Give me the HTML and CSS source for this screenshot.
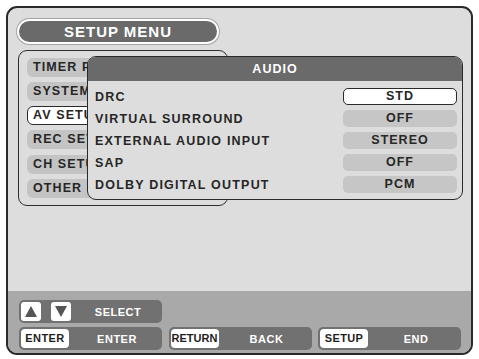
FILE: index.html
```html
<!DOCTYPE html>
<html>
<head>
<meta charset="utf-8">
<link rel="stylesheet" href="styles.css">
</head>
<body>
<div class="frame">
  <div class="main">
    <div class="title">SETUP MENU</div>
    <div class="menu">
      <div class="item">TIMER PROGRAMMING</div>
      <div class="item">SYSTEM SETUP</div>
      <div class="item selected">AV SETUP</div>
      <div class="item">REC SETUP</div>
      <div class="item">CH SETUP</div>
      <div class="item">OTHER</div>
    </div>
  </div>
  <div class="footer">
    <div class="frow">
      <div class="fpill">
        <span class="sq"><svg width="12" height="11" viewBox="0 0 12 11"><polygon points="6,0 12,11 0,11" fill="#555"/></svg></span>
        <span class="sq sq2"><svg width="12" height="11" viewBox="0 0 12 11"><polygon points="0,0 12,0 6,11" fill="#555"/></svg></span>
        <span class="flabel">SELECT</span>
      </div>
    </div>
    <div class="frow">
      <div class="fpill"><span class="key">ENTER</span><span class="flabel">ENTER</span></div>
      <div class="fpill"><span class="key tight">RETURN</span><span class="flabel">BACK</span></div>
      <div class="fpill"><span class="key">SETUP</span><span class="flabel">END</span></div>
    </div>
  </div>
  <div class="audio">
    <div class="ahead">AUDIO</div>
    <div class="abody">
      <div class="arow"><span class="alabel">DRC</span><span class="val active">STD</span></div>
      <div class="arow"><span class="alabel">VIRTUAL SURROUND</span><span class="val">OFF</span></div>
      <div class="arow"><span class="alabel">EXTERNAL AUDIO INPUT</span><span class="val">STEREO</span></div>
      <div class="arow"><span class="alabel">SAP</span><span class="val">OFF</span></div>
      <div class="arow"><span class="alabel">DOLBY DIGITAL OUTPUT</span><span class="val">PCM</span></div>
    </div>
  </div>
</div>
</body>
</html>
```
FILE: styles.css
```css
* { box-sizing: border-box; }
html, body { margin: 0; padding: 0; background: #ffffff; }
body {
  font-family: "Liberation Sans", Arial, sans-serif;
  font-weight: bold;
  color: #262626;
}
.frame {
  position: relative;
  margin: 6px 0 0 6px;
  width: 467px;
  height: 349px;
  border: 2px solid #2a2a2a;
  border-radius: 11px;
  background: #dddddd;
  overflow: hidden;
  display: flex;
  flex-direction: column;
}
.main {
  height: 283px;
  padding: 11px 0 0 9px;
}
.title {
  width: 202px;
  height: 25px;
  border: 2px solid #ffffff;
  border-radius: 13px;
  background: #6a6a6a;
  color: #ffffff;
  font-size: 15px;
  letter-spacing: 1px;
  text-align: center;
  line-height: 21px;
  box-shadow: 0 0 0 1px #a5a5a5;
}
.menu {
  margin: 6px 0 0 1px;
  width: 210px;
  height: 156px;
  border: 1.5px solid #2e2e2e;
  border-radius: 9px;
  padding: 6.5px 0 0 8px;
  display: flex;
  flex-direction: column;
  gap: 5.3px;
}
.item {
  width: 191px;
  height: 19px;
  border-radius: 6px;
  background: #c4c4c4;
  font-size: 12.5px;
  letter-spacing: 1.1px;
  line-height: 19px;
  padding-left: 6px;
  white-space: nowrap;
  overflow: hidden;
}
.item.selected {
  background: #ffffff;
  border: 1.5px solid #2a2a2a;
  line-height: 16px;
  padding-left: 5px;
}
.audio {
  position: absolute;
  left: 79px;
  top: 48px;
  width: 376px;
  height: 144px;
  border: 1.5px solid #2a2a2a;
  border-radius: 9px;
  background: #dddddd;
  overflow: hidden;
}
.ahead {
  height: 24px;
  background: #6a6a6a;
  color: #ffffff;
  font-size: 12.5px;
  letter-spacing: 1px;
  text-align: center;
  line-height: 24px;
}
.abody {
  padding: 6.5px 5px 0 7px;
  display: flex;
  flex-direction: column;
  gap: 5px;
}
.arow {
  display: flex;
  align-items: center;
  justify-content: space-between;
  height: 17px;
}
.alabel {
  font-size: 12.5px;
  letter-spacing: 1.2px;
  white-space: nowrap;
  padding-top: 2px;
}
.val {
  width: 114px;
  height: 17px;
  border-radius: 5px;
  background: #c6c6c6;
  font-size: 12.5px;
  letter-spacing: 1px;
  text-align: center;
  line-height: 17px;
}
.val.active {
  background: #ffffff;
  border: 1.5px solid #2a2a2a;
  line-height: 14px;
}
.footer {
  flex: 1;
  background: #a9a9a9;
  padding: 9px 0 0 11px;
  display: flex;
  flex-direction: column;
  gap: 4px;
}
.frow {
  display: flex;
  gap: 6.5px;
}
.fpill {
  width: 143px;
  height: 23px;
  border-radius: 5px;
  background: #717171;
  display: flex;
  align-items: center;
  padding: 0 2px;
}
.sq {
  width: 20px;
  height: 19px;
  background: #ffffff;
  border-radius: 3px;
  display: flex;
  align-items: center;
  justify-content: center;
}
.sq2 { margin-left: 10px; }
.key {
  width: 48px;
  height: 19px;
  background: #ffffff;
  border-radius: 4px;
  color: #1e1e1e;
  font-size: 11px;
  letter-spacing: 0.4px;
  text-align: center;
  line-height: 19px;
}
.key.tight { letter-spacing: 0; }
.flabel {
  flex: 1;
  text-align: center;
  color: #ffffff;
  font-size: 11px;
  letter-spacing: 0.5px;
  padding-left: 5px;
}
```
